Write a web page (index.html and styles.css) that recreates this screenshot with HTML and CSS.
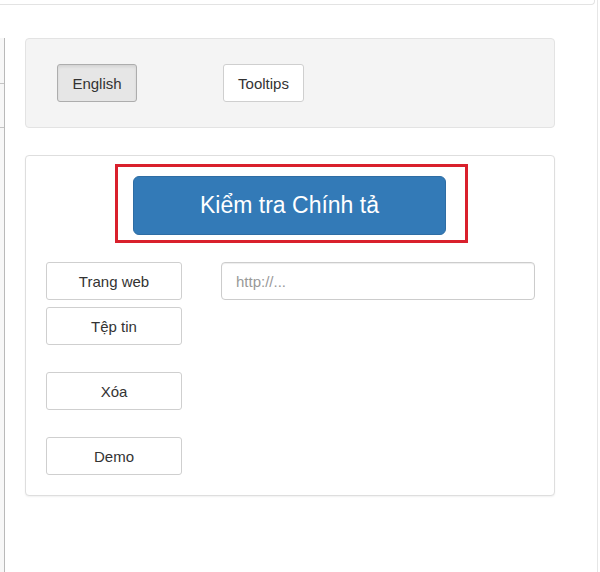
FILE: index.html
```html
<!DOCTYPE html>
<html lang="vi">
<head>
<meta charset="utf-8">
<title>Kiểm tra Chính tả</title>
<link rel="stylesheet" href="styles.css">
</head>
<body>
<div class="frame">
  <div class="topbar"></div>
  <div class="body-row">
    <div class="stub">
      <div class="stub-cell first"></div>
      <div class="stub-cell second"></div>
      <div class="stub-rest"></div>
    </div>
    <main class="content">
      <section class="panel toolbar">
        <button class="btn btn-active btn-lang">English</button>
        <button class="btn btn-tips">Tooltips</button>
      </section>
      <section class="panel checker">
        <div class="highlight">
          <button class="btn-primary">Kiểm tra Chính tả</button>
        </div>
        <div class="tools">
          <div class="tool-col">
            <button class="btn btn-tool">Trang web</button>
            <button class="btn btn-tool gap-small">Tệp tin</button>
            <button class="btn btn-tool gap-large">Xóa</button>
            <button class="btn btn-tool gap-large">Demo</button>
          </div>
          <input class="url" type="text" placeholder="http://...">
        </div>
      </section>
    </main>
  </div>
</div>
</body>
</html>
```

FILE: styles.css
```css
* { box-sizing: border-box; }
html, body { margin: 0; padding: 0; background: #fff; }
body {
  font-family: "Liberation Sans", Arial, sans-serif;
  color: #333;
  width: 600px;
  height: 572px;
  overflow: hidden;
}
.frame {
  width: 598px;
  height: 572px;
  border-right: 1px solid #e6e6e6;
  display: flex;
  flex-direction: column;
}
.topbar {
  height: 5px;
  margin-right: 2px;
  border-bottom: 1px solid #e3e3e3;
  border-right: 1px solid #e3e3e3;
  border-bottom-right-radius: 4px;
}
.body-row {
  display: flex;
  flex: 1;
}
.stub {
  width: 5px;
  margin-top: 33px;
  border-right: 1px solid #b9b9b9;
  display: flex;
  flex-direction: column;
  background: #f7f7f7;
}
.stub-cell { border-bottom: 1px solid #c4c4c4; }
.stub-cell.first { height: 46px; }
.stub-cell.second { height: 44px; }
.stub-rest { flex: 1; }
.content {
  margin-left: 20px;
  width: 530px;
  padding-top: 33px;
}
.panel {
  border-radius: 4px;
}
.toolbar {
  height: 90px;
  background: #f4f4f4;
  border: 1px solid #e3e3e3;
  padding: 25px 31px;
  display: flex;
  align-items: flex-start;
}
.btn {
  font-family: "Liberation Sans", Arial, sans-serif;
  font-size: 15px;
  color: #333;
  background: #fff;
  border: 1px solid #cfcfcf;
  border-radius: 3px;
  height: 38px;
  padding: 0;
  display: flex;
  align-items: center;
  justify-content: center;
}
.btn-active {
  background: #e6e6e6;
  border-color: #adadad;
  box-shadow: inset 0 2px 3px rgba(0,0,0,0.08);
}
.btn-lang { width: 80px; }
.btn-tips { width: 81px; margin-left: 86px; }
.checker {
  margin-top: 27px;
  height: 341px;
  background: #fff;
  border: 1px solid #dedede;
  box-shadow: 0 1px 2px rgba(0,0,0,0.06);
  padding: 8px 19px 19px 20px;
}
.highlight {
  margin-left: 69px;
  width: 353px;
  border: 3px solid #d9202c;
  padding: 9px 19px 5px 15px;
}
.btn-primary {
  display: block;
  width: 313px;
  height: 59px;
  border: 1px solid #2e6da4;
  border-radius: 6px;
  background: #337ab7;
  color: #fff;
  font-family: "Liberation Sans", Arial, sans-serif;
  font-size: 23px;
  padding: 0;
}
.tools {
  margin-top: 19px;
  display: flex;
  align-items: flex-start;
}
.tool-col {
  display: flex;
  flex-direction: column;
}
.btn-tool { width: 136px; }
.gap-small { margin-top: 7px; }
.gap-large { margin-top: 27px; }
.url {
  margin-left: 39px;
  width: 314px;
  height: 38px;
  border: 1px solid #cccccc;
  border-radius: 4px;
  box-shadow: inset 0 1px 1px rgba(0,0,0,0.075);
  padding: 0 14px;
  font-family: "Liberation Sans", Arial, sans-serif;
  font-size: 15px;
  color: #555;
  outline: none;
}
.url::placeholder { color: #999; }
```
